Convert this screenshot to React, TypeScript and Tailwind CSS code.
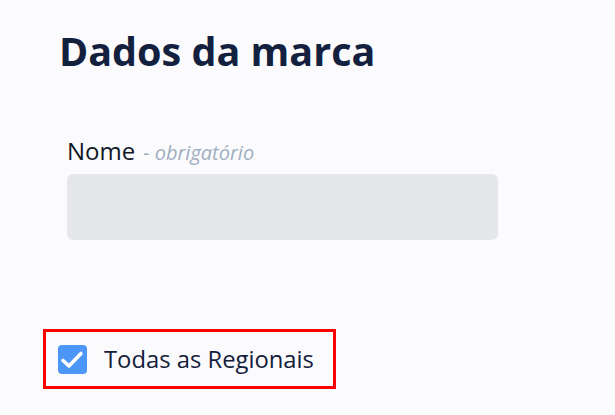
// Formulário "Dados da marca": título, campo Nome e checkbox de regionais.

export default function App() {
  return (
    <div className="min-h-screen w-full bg-[#fbfbfd] font-['Open_Sans',sans-serif] overflow-hidden">
      <div className="pl-[59px] pt-[26px]">
        <h1 className="text-[39.5px] leading-[50px] font-bold text-[#13213f]">Dados da marca</h1>
      </div>

      {/* Campo Nome */}
      <div className="pl-[67px] pt-[60px] w-[498px]">
        <label className="flex items-baseline gap-[8px] text-[24px] leading-[30px] text-[#111827]">
          Nome
          <span className="text-[20px] italic text-[#a0aec0]">- obrigatório</span>
        </label>
        <div className="mt-[6px] h-[66px] w-[431px] rounded-md bg-[#e5e7eb]" />
      </div>

      {/* Checkbox destacado */}
      <div className="pl-[43px] pt-[89px]">
        <div className="inline-flex items-center gap-[17px] border-[3px] border-[#ff0000] pl-[12px] h-[60px] w-[293px] whitespace-nowrap">
          <span className="flex h-[29px] w-[29px] shrink-0 rounded-[4px] bg-[#4b96f6]">
            <svg viewBox="0 0 29 29" className="h-[29px] w-[29px]" fill="none">
              <path d="M5 15.5 L11 21 L23 8.5" stroke="white" strokeWidth={3.6} strokeLinecap="round" strokeLinejoin="round" />
            </svg>
          </span>
          <span className="text-[23.8px] leading-[32px] text-[#14203b]">Todas as Regionais</span>
        </div>
      </div>
    </div>
  )
}
